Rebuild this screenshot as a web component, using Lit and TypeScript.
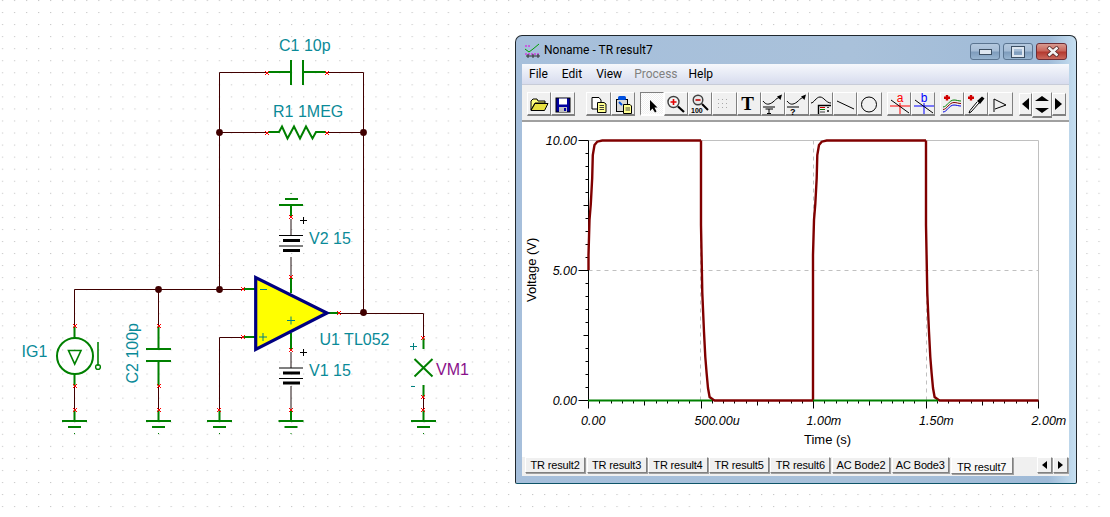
import { css, html, svg, LitElement } from 'lit';
import { customElement } from 'lit/decorators.js';

const WIRE = '#400000';
const GREEN = '#008000';

const wires = [
  'M219.5 289V72.5H268',
  'M326 72.5H363.5V313',
  'M219.5 132.5H268',
  'M326 132.5H363.5',
  'M74.5 326V289.5H243',
  'M158.5 289.5V326',
  'M243 337.5H219.5V410',
  'M339 313.5H423.5V338',
  'M74.5 386V410',
  'M158.5 386V410',
  'M423.5 397V410',
];

const leads = [
  'M268 72H291M303 72H326',
  'M268 132H279L282 126.5L287.5 138.5L294 126.5L300 138.5L306 126.5L312.5 138.5L316 132H326',
  'M74.5 326V338M74.5 374V386',
  'M158.5 326V349M158.5 361V386',
  'M244 289H256M244 337H256',
  'M327 313H339',
  'M291 277V293M291 333V350',
  'M291 205V217',
  'M423.5 338V349M423.5 385V397',
  'M74.5 410V421M158.5 410V421M219.5 410V421M291 410V421M423.5 410V421',
];

const marks: [number, number][] = [
  [267, 73], [327, 73], [267, 133], [327, 133], [75, 326], [75, 386], [75, 410],
  [159, 326], [159, 386], [159, 410], [219, 410], [291, 410], [291, 350], [291, 277],
  [291, 217], [243, 289], [243, 337], [339, 313], [423, 338], [423, 397], [423, 410],
];

const junctions: [number, number][] = [
  [219.5, 132.5], [363.5, 132.5], [158.5, 289.5], [219.5, 289.5], [363.5, 312.5],
];

const ground = (x: number) => svg`
  <path d="M${x - 12.5} 421H${x + 12.5}M${x - 6.5} 427H${x + 6.5}" stroke=${GREEN} stroke-width="2" fill="none" />
  <rect x=${x - 0.5} y="433" width="1" height="1" fill=${GREEN} />
`;

const battery = (y: number) => svg`
  <path d="M279 ${y + 0.5}H303M279 ${y + 11}H303" stroke="#000" fill="none" />
  <rect x="283" y=${y + 4} width="17" height="3" fill="#000" />
  <rect x="283" y=${y + 14} width="17" height="3" fill="#000" />
`;

const plus = (x: number, y: number, color: string, r = 3.5) =>
  svg`<path d="M${x - r} ${y}H${x + r}M${x} ${y - r}V${y + r}" stroke=${color} fill="none" />`;

@customElement('schematic-view')
export class SchematicView extends LitElement {
  static styles = css`
    svg {
      display: block;
    }
    text {
      font-family: 'Liberation Sans', Arial, sans-serif;
      font-size: 16px;
      fill: #0a8a98;
    }
    .meter {
      fill: #8a108a;
    }
  `;

  render() {
    return html`<svg width="1110" height="517" viewBox="0 0 1110 517">
      <defs>
        <pattern id="dots" width="12.05" height="12.05" patternUnits="userSpaceOnUse">
          <rect x="2" y="0" width="1" height="1" fill="#bcbcbc" />
        </pattern>
      </defs>
      <rect width="1110" height="517" fill="url(#dots)" />

      ${wires.map((d) => svg`<path d=${d} stroke=${WIRE} fill="none" />`)}
      <path d="M291 219V235M291 257V277M291 352V368M291 386V410" stroke="#201010" fill="none" />
      ${leads.map((d) => svg`<path d=${d} stroke=${GREEN} stroke-width="2" fill="none" />`)}

      <!-- capacitors -->
      <path d="M291 60V85M303 60V85M146 349H171M146 361H171" stroke=${GREEN} stroke-width="2" fill="none" />

      <!-- current source -->
      <circle cx="75" cy="356" r="18" stroke=${GREEN} stroke-width="2" fill="none" />
      <path d="M68.5 350.5H81L74.7 364Z" stroke=${GREEN} stroke-width="1.6" fill="none" />
      <path d="M98 342V366" stroke=${GREEN} stroke-width="1.6" fill="none" />
      <circle cx="98" cy="367" r="2.4" stroke=${GREEN} stroke-width="1.4" fill="none" />

      <!-- batteries -->
      ${battery(235)} ${battery(367.5)}
      <path d="M285 199H298M279 205H303" stroke=${GREEN} stroke-width="2" fill="none" />
      <rect x="290.5" y="193" width="1" height="1" fill=${GREEN} />
      ${plus(303.5, 220.5, '#000')} ${plus(303.5, 352.5, '#000')}

      <!-- op amp -->
      <path d="M255.7 277.5V349.5L327 313Z" fill="#ffff00" stroke="#000080" stroke-width="3.2" />
      <path d="M260 289.5H267" stroke="#008080" fill="none" />
      ${plus(263, 337, '#008080', 4)} ${plus(291, 320.5, '#008080', 4)}

      <!-- voltmeter -->
      <path d="M414.5 359L432.5 376.5M432.5 359L414.5 376.5" stroke=${GREEN} stroke-width="2" fill="none" />
      ${plus(413.5, 346.5, '#008080', 3.5)}
      <path d="M411 386.5H415" stroke="#008080" fill="none" />

      ${ground(74.5)} ${ground(158.5)} ${ground(219.5)} ${ground(291)} ${ground(423.5)}

      ${junctions.map(([x, y]) => svg`<circle cx=${x} cy=${y} r="3.4" fill=${WIRE} />`)}
      ${marks.map(
        ([x, y]) => svg`<path d="M${x - 2} ${y - 2}l4 4M${x + 2} ${y - 2}l-4 4" stroke="#ff0000" fill="none" />`,
      )}

      <text x="279" y="51">C1 10p</text>
      <text x="273" y="117">R1 1MEG</text>
      <text x="309" y="244">V2 15</text>
      <text x="309" y="376">V1 15</text>
      <text x="319.5" y="345">U1 TL052</text>
      <text x="436" y="375" class="meter">VM1</text>
      <text x="21.5" y="357">IG1</text>
      <text transform="translate(137.5 383.5) rotate(-90)">C2 100p</text>
    </svg>`;
  }
}

// outline of the square wave, read off the simulator plot
const rise = (x: number) =>
  `M${x} 400V255L${x + 1} 220L${x + 2.3} 204L${x + 3.7} 178L${x + 4.3} 155L${x + 6} 145L${x + 8.7} 141.7L${x + 13.7} 140.5`;
const fall = (x: number) =>
  `M${x} 140.5V225L${x + 1.3} 293L${x + 3} 332L${x + 4.3} 357L${x + 5.6} 373L${x + 7} 388L${x + 8.6} 397L${x + 13.3} 400.5`;

const PLOT_LEFT = 588.5;
const PLOT_RIGHT = 1038.5;
const PLOT_TOP = 140.5;
const PLOT_BOTTOM = 400.5;

const xLabels = [
  { x: 581, label: '0.00' },
  { x: 694.5, label: '500.00u' },
  { x: 806.5, label: '1.00m' },
  { x: 919, label: '1.50m' },
  { x: 1031.5, label: '2.00m' },
];

const yLabels = [
  { y: 145, label: '10.00' },
  { y: 275, label: '5.00' },
  { y: 405, label: '0.00' },
];

const plotTicks = () => {
  let d = '';
  for (let i = 0; i <= 40; i++) {
    const x = Math.round(588 + i * 11.25) + 0.5;
    const len = i % 10 === 0 ? 8 : i % 5 === 0 ? 5 : 3;
    d += `M${x} ${PLOT_BOTTOM}v${len}`;
  }
  for (let i = 0; i <= 20; i++) {
    const y = 140.5 + i * 13;
    const len = i % 10 === 0 ? 10 : i % 5 === 0 ? 5 : 3;
    d += `M${PLOT_LEFT} ${y}h${-len}`;
  }
  return d;
};

@customElement('result-plot')
export class ResultPlot extends LitElement {
  static styles = css`
    :host {
      display: block;
      flex: 1;
      background: #fff;
    }
    svg {
      display: block;
    }
    text {
      font-family: 'Liberation Sans', Arial, sans-serif;
      fill: #000;
    }
    .value {
      font-size: 12.5px;
      font-style: italic;
    }
    .axis {
      font-size: 13px;
    }
  `;

  render() {
    return html`<svg width="547" height="335" viewBox="522 122 547 335">
      <path d="M${PLOT_LEFT} ${PLOT_TOP}H${PLOT_RIGHT}V${PLOT_BOTTOM}" stroke="#c0c0c0" fill="none" />
      <path
        d="M${PLOT_LEFT} 270.5H${PLOT_RIGHT}M700.5 ${PLOT_TOP}V${PLOT_BOTTOM}M813.5 ${PLOT_TOP}V${PLOT_BOTTOM}M926.5 ${PLOT_TOP}V${PLOT_BOTTOM}"
        stroke="#c0c0c0"
        stroke-dasharray="4 4"
        fill="none"
      />
      <path d="M${PLOT_LEFT} ${PLOT_TOP}V${PLOT_BOTTOM}H${PLOT_RIGHT}" stroke="#000" fill="none" />
      <path d=${plotTicks()} stroke="#000" fill="none" />

      <g stroke="#800000" stroke-width="2.4" fill="none">
        <path d="M588.5 270V255L589.5 220L590.8 204L592.2 178L592.8 155L594.5 145L597.2 141.7L602.2 140.5H701" />
        <path d=${fall(701)} />
        <path d="M714 400.5H813" />
        <path d="${rise(813)}H926" />
        <path d=${fall(926)} />
        <path d="M939 400.5H1038.5" />
      </g>
      <path d="M588 400.5H712M813 400.5H938" stroke="#008000" stroke-width="2" fill="none" />

      ${yLabels.map((l) => svg`<text class="value" x="577" y=${l.y} text-anchor="end">${l.label}</text>`)}
      ${xLabels.map((l) => svg`<text class="value" x=${l.x} y="425">${l.label}</text>`)}
      <text class="axis" x="804" y="444">Time (s)</text>
      <text class="axis" transform="translate(536 302) rotate(-90)">Voltage (V)</text>
    </svg>`;
  }
}

const curve = 'M2 9C5 13 8 13 12 10C14 8.5 15 6.5 18 5.5';

const icons = {
  open: svg`<path d="M4 18V9L6 7H10L11 9H18V11H8L4 18Z" fill="#ffff80" stroke="#000" /><path d="M4 18.5L8 11.5H21L17.5 18.5Z" fill="#e8e040" stroke="#000" />`,
  save: svg`<rect x="5" y="6" width="14" height="14" fill="#0000a0" stroke="#000" /><rect x="8" y="6.5" width="8" height="6" fill="#fff" /><rect x="8" y="15" width="8" height="5" fill="#c0c0c0" /><rect x="13" y="16" width="2" height="3" fill="#0000a0" />`,
  copy: svg`<path d="M6 5.5H13L15 8V17H6Z" fill="#fff" stroke="#000" /><path d="M11.5 10.5H18L20 12V20.5H11.5Z" fill="#ffff90" stroke="#000" /><path d="M13.5 13.5H18M13.5 15.5H18M13.5 17.5H18" stroke="#404040" />`,
  paste: svg`<rect x="5.5" y="7.5" width="11" height="12" fill="#d8d8d8" stroke="#000" /><rect x="7" y="4" width="8" height="4" rx="1.5" fill="#0050e0" /><path d="M8 10l3 3" stroke="#0050e0" stroke-width="2" /><path d="M12.5 12.5H19L20.5 14V21.5H12.5Z" fill="#ffff90" stroke="#000" /><path d="M14.5 16H19M14.5 18H19" stroke="#404040" />`,
  pointer: svg`<path d="M10 8V19L12.5 16.5L15 20.5L16.5 19.5L14.5 15.5H17.5Z" fill="#000" />`,
  zoomIn: svg`<circle cx="9.5" cy="10" r="5.5" fill="#f4f4f4" stroke="#404040" stroke-width="1.4" /><path d="M6.5 10H12.5M9.5 7V13" stroke="#e00000" stroke-width="1.6" /><path d="M14 14.5L20 20" stroke="#000" stroke-width="2.2" />`,
  zoomAll: svg`<circle cx="10" cy="8" r="4.8" fill="#e8e8e8" stroke="#404040" stroke-width="1.4" /><path d="M7.5 8H12.5" stroke="#c00000" stroke-width="1.6" /><path d="M14 12L20 18" stroke="#000" stroke-width="2" /><text x="3" y="21" class="tiny">100</text>`,
  grid: svg`<path d="M6 7.5H18M6 11.5H18M6 15.5H18" stroke="#a8a8a8" stroke-dasharray="1 3" />`,
  text: svg`<text x="10.5" y="18" class="big">T</text>`,
  curveT: svg`<path d=${curve} stroke="#000" fill="none" /><path d="M21 2.5L19.5 8L16 4.5Z" fill="#000" /><path d="M2 15H14M4.5 17H12M8 17V21.5M6 21.5H10" stroke="#000" fill="none" />`,
  curveQ: svg`<path d=${curve} stroke="#000" fill="none" /><path d="M21 2.5L19.5 8L16 4.5Z" fill="#000" /><path d="M2 15H14" stroke="#000" fill="none" /><text x="5" y="23" class="mark">?</text>`,
  curveBox: svg`<path d="M2 11C5 11 7 5 11 5C15 5 17 11 22 11" stroke="#000" fill="none" /><path d="M9.5 22V13.5H22" stroke="#000" stroke-width="1.4" fill="none" /><path d="M11 15.5H16" stroke="#d00000" /><path d="M11 17.5H16" stroke="#008000" /><path d="M11 20H16M18 15.5h2M18 18l2 2M20 18l-2 2" stroke="#404040" />`,
  line: svg`<path d="M4 9L21 17" stroke="#000" />`,
  circle: svg`<circle cx="12" cy="12.5" r="7.5" fill="none" stroke="#000" />`,
  cursorA: svg`<text x="13" y="10" class="tag" fill="#ff0000">a</text><path d="M3 14H23M13 11V22" stroke="#ff0000" /><path d="M4 8L22 21" stroke="#000" />`,
  cursorB: svg`<text x="13" y="10" class="tag" fill="#0000ff">b</text><path d="M3 14H23M13 11V22" stroke="#0000ff" /><path d="M4 8L22 21" stroke="#000" />`,
  traces: svg`<path d="M7 3V8.5M4 5.7H10" stroke="#d00000" stroke-width="2.4" /><path d="M3 15C7 15 9 8 14 8C17 8 18 9 21 9" stroke="#008000" fill="none" /><path d="M3 17.5C7 17.5 9 10.5 14 10.5C17 10.5 18 11.5 21 11.5" stroke="#800000" fill="none" /><path d="M3 20C7 20 9 13 14 13C17 13 18 14 21 14" stroke="#0000e0" fill="none" />`,
  dropper: svg`<path d="M7 3V8.5M4 5.7H10" stroke="#d00000" stroke-width="2.4" /><path d="M15 11L7 20L5 21L6 18.5L13 10" stroke="#000" fill="#fff" /><path d="M13 9L18 4.5L20.5 6.5L16 12Z" fill="#000" />`,
  flag: svg`<path d="M6 20V7L18 13L7 17" stroke="#000" fill="none" />`,
};

type IconName = keyof typeof icons;

const toolGroups: { wide?: boolean; items: IconName[] }[] = [
  { items: ['open', 'save'] },
  { wide: true, items: ['copy', 'paste'] },
  {
    items: ['pointer', 'zoomIn', 'zoomAll', 'grid', 'text', 'curveT', 'curveQ', 'curveBox', 'line', 'circle'],
  },
  { items: ['cursorA', 'cursorB'] },
  { items: ['traces', 'dropper', 'flag'] },
];

const tabs = [
  { label: 'TR result2', width: 60 },
  { label: 'TR result3', width: 60 },
  { label: 'TR result4', width: 59.5 },
  { label: 'TR result5', width: 59.5 },
  { label: 'TR result6', width: 60 },
  { label: 'AC Bode2', width: 58 },
  { label: 'AC Bode3', width: 57.5 },
];

@customElement('result-window')
export class ResultWindow extends LitElement {
  static styles = css`
    :host {
      display: block;
    }
    .window {
      box-sizing: border-box;
      width: 562px;
      height: 449px;
      display: flex;
      flex-direction: column;
      padding: 0 7px 7px 6px;
      border: 1px solid #20282e;
      border-bottom-color: #0d5468;
      border-radius: 7px 7px 2px 2px;
      background: linear-gradient(90deg, #a6bfdb 0%, #a9c1da 60%, #9fbad7 95%, #c6dff1 100%);
      font-family: Roboto, 'Liberation Sans', sans-serif;
    }
    .title {
      flex: none;
      height: 28px;
      display: flex;
      align-items: center;
      gap: 3px;
      font-size: 12px;
      color: #000;
    }
    .title svg {
      margin-left: 2px;
    }
    .caption {
      display: flex;
      gap: 3px;
      margin-left: auto;
      margin-right: 2px;
      padding-top: 3px;
    }
    .caption span {
      box-sizing: border-box;
      width: 30px;
      height: 17px;
      display: flex;
      align-items: center;
      justify-content: center;
      border: 1px solid #5a7490;
      border-radius: 3px;
      background: linear-gradient(#b4c8de 0%, #a6bdd6 45%, #7f9dbd 55%, #97b4d0 100%);
    }
    .caption .close {
      width: 31px;
      border-color: #6d2d35;
      background: linear-gradient(#d89a90 0%, #c9675c 45%, #b43a30 55%, #c9685c 100%);
    }
    .minimize {
      width: 11px;
      height: 4px;
      background: #dde6f0;
      border: 1px solid #3c4f63;
    }
    .maximize {
      width: 8px;
      height: 6px;
      border: 2px solid #dde6f0;
      outline: 1px solid #3c4f63;
    }
    .client {
      flex: 1;
      display: flex;
      flex-direction: column;
      background: #f0f0f0;
    }
    .menu {
      flex: none;
      height: 20px;
      display: flex;
      align-items: center;
      font-size: 12px;
      color: #000;
      background: linear-gradient(#f6f8fc, #d7dcee);
      border-bottom: 1px solid #c8ccd8;
    }
    .menu span {
      padding: 0 7px;
    }
    .menu .off {
      color: #808080;
      margin-left: -2px;
      margin-right: -3px;
    }
    .tools {
      flex: none;
      box-sizing: border-box;
      height: 37px;
      display: flex;
      align-items: flex-start;
      padding: 7px 0 0 5px;
      border-bottom: 2px solid #a0a0a0;
    }
    .group {
      display: flex;
      margin-right: 5px;
    }
    .group.wide {
      margin-left: 6px;
    }
    .tool {
      box-sizing: border-box;
      width: 24.2px;
      height: 24px;
      border-top: 1px solid #fff;
      border-left: 1px solid #fff;
      border-right: 1px solid #808080;
      border-bottom: 2px solid #808080;
      background: #f0f0f0;
    }
    .tool.down {
      border-color: #808080 #fff #fff #808080;
      background: repeating-conic-gradient(#fff 0 25%, #f0f0f0 0 50%) 0 0 / 2px 2px;
    }
    .tool svg {
      display: block;
      margin: -1px;
    }
    .tiny {
      font: 700 7px 'Liberation Sans', sans-serif;
    }
    .big {
      font: 700 19px 'Liberation Serif', serif;
      text-anchor: middle;
    }
    .mark {
      font: 700 9px 'Liberation Sans', sans-serif;
    }
    .tag {
      font: 12px 'Liberation Sans', sans-serif;
      text-anchor: middle;
    }
    .scroll {
      display: flex;
      margin-left: 1px;
    }
    .step {
      box-sizing: border-box;
      width: 13.5px;
      height: 23px;
      margin-top: 0.5px;
      display: flex;
      align-items: center;
      justify-content: center;
      border-top: 1px solid #fff;
      border-left: 1px solid #fff;
      border-right: 1px solid #808080;
      border-bottom: 2px solid #808080;
    }
    .updown {
      box-sizing: border-box;
      width: 20px;
      height: 26px;
      display: flex;
      flex-direction: column;
      align-items: center;
      justify-content: space-around;
      border-top: 1px solid #fff;
      border-right: 1px solid #808080;
      border-bottom: 2px solid #808080;
      border-left: 1px solid #fff;
    }
    .arrow {
      width: 0;
      height: 0;
      border: 5px solid transparent;
    }
    .arrow.left {
      border-right: 7px solid #000;
      border-left-width: 0;
      border-top-width: 6px;
      border-bottom-width: 6px;
    }
    .arrow.right {
      border-left: 7px solid #000;
      border-right-width: 0;
      border-top-width: 6px;
      border-bottom-width: 6px;
    }
    .arrow.up {
      border-bottom: 5px solid #000;
      border-top-width: 0;
      border-left-width: 7px;
      border-right-width: 7px;
    }
    .arrow.down {
      border-top: 5px solid #000;
      border-bottom-width: 0;
      border-left-width: 7px;
      border-right-width: 7px;
    }
    .tabs {
      flex: none;
      height: 19px;
      display: flex;
      align-items: flex-start;
      gap: 1.6px;
      padding-left: 3px;
      font: 11px 'Liberation Sans', sans-serif;
      letter-spacing: -0.15px;
      color: #000;
    }
    .tab {
      box-sizing: border-box;
      height: 16px;
      display: flex;
      align-items: center;
      justify-content: center;
      border-top: 1px solid #fff;
      border-left: 1px solid #fff;
      border-right: 1px solid #808080;
      border-bottom: 1px solid #808080;
      box-shadow: 1px 1px 0 #a0a0a0;
    }
    .tab.active {
      width: 62px;
      height: 17px;
      background: #f8f8f8;
      padding-top: 2px;
    }
    .tab-scroll {
      display: flex;
      gap: 1.5px;
      margin-left: auto;
      margin-right: 1px;
    }
    .tab-scroll .tab {
      width: 15px;
    }
    .tab-scroll .arrow {
      border-top-width: 4px;
      border-bottom-width: 4px;
    }
    .tab-scroll .arrow.left {
      border-right-width: 5px;
    }
    .tab-scroll .arrow.right {
      border-left-width: 5px;
    }
  `;

  render() {
    return html`<div class="window">
      <div class="title">
        <svg width="17" height="17" viewBox="0 0 17 17">
          <path d="M1 7L5 10L9 7L15 2" stroke="#00a000" fill="none" />
          <path d="M1 4H6M1 12H16" stroke="#e000e0" stroke-dasharray="2 1" fill="none" />
          <path d="M4 12V16M9 12V16M14 12V16M2 14H16" stroke="#303030" fill="none" />
        </svg>
        <span>Noname - TR result7</span>
        <div class="caption">
          <span><i class="minimize"></i></span>
          <span><i class="maximize"></i></span>
          <span class="close">
            <svg width="14" height="11" viewBox="0 0 14 11">
              <path d="M2 1L12 10M12 1L2 10" stroke="#4a2020" stroke-width="4" />
              <path d="M2.5 1.5L11.5 9.5M11.5 1.5L2.5 9.5" stroke="#f4f4f4" stroke-width="2.6" />
            </svg>
          </span>
        </div>
      </div>
      <div class="client">
        <div class="menu">
          <span>File</span><span>Edit</span><span>View</span><span class="off">Process</span><span>Help</span>
        </div>
        <div class="tools">
          ${toolGroups.map(
            (group) => html`<div class="group ${group.wide ? 'wide' : ''}">
              ${group.items.map(
                (name) => html`<div class="tool ${name === 'pointer' ? 'down' : ''}">
                  <svg width="24" height="24" viewBox="0 0 24 24">${icons[name]}</svg>
                </div>`,
              )}
            </div>`,
          )}
          <div class="scroll">
            <div class="step"><i class="arrow left"></i></div>
            <div class="updown"><i class="arrow up"></i><i class="arrow down"></i></div>
            <div class="step"><i class="arrow right"></i></div>
          </div>
        </div>
        <result-plot></result-plot>
        <div class="tabs">
          ${tabs.map((tab) => html`<div class="tab" style="width: ${tab.width}px">${tab.label}</div>`)}
          <div class="tab active">TR result7</div>
          <div class="tab-scroll">
            <div class="tab"><i class="arrow left"></i></div>
            <div class="tab"><i class="arrow right"></i></div>
          </div>
        </div>
      </div>
    </div>`;
  }
}

@customElement('app-root')
export class AppRoot extends LitElement {
  static styles = css`
    :host {
      display: block;
      width: 1110px;
      height: 517px;
      background: #fff;
    }
    .canvas {
      position: relative;
      box-sizing: border-box;
      width: 1110px;
      height: 517px;
      padding: 35px 0 0 515px;
      overflow: hidden;
    }
    schematic-view {
      position: absolute;
      left: 0;
      top: 0;
    }
    result-window {
      position: relative;
    }
  `;

  render() {
    return html`<div class="canvas">
      <schematic-view></schematic-view>
      <result-window></result-window>
    </div>`;
  }
}
